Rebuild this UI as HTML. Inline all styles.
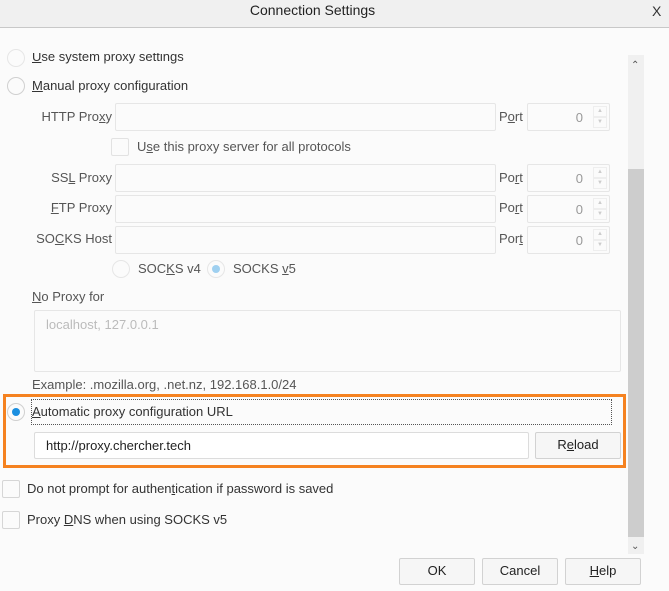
<!DOCTYPE html>
<html><head><style>
*{box-sizing:border-box;margin:0;padding:0}
body{width:669px;height:591px;background:#fbfbfb;font-family:"Liberation Sans",sans-serif;font-size:13px;color:#333;position:relative;overflow:hidden}
.a{position:absolute;white-space:nowrap}
.t{position:absolute;white-space:nowrap;line-height:16px}
.in{position:absolute;background:#fff;border:1px solid #dcdcdc;border-radius:2px}
.dis{background:#fbfbfb;border-color:#e6e6e6}
.rad{position:absolute;width:18px;height:18px;border:1px solid #d0d0d0;border-radius:50%;background:#fbfbfb}
.rad.dim{border-color:#e6e6e6}
.rad.on::after{content:"";position:absolute;left:4px;top:4px;width:8px;height:8px;border-radius:50%;background:#1b8fe0}
.rad.on.dim::after{background:#9fd0f0}
.cb{position:absolute;width:18px;height:18px;border:1px solid #d6d6d6;border-radius:2px;background:#fbfbfb}
.g{color:#999}
.btn{position:absolute;background:#f6f6f6;border:1px solid #d2d2d2;border-radius:2px;text-align:center;line-height:24px;color:#222}
.sp{position:absolute;right:2px;width:14px;height:11px;border:1px solid #eee;font-size:6px;color:#ccc;text-align:center;line-height:9px}
u{text-decoration:underline}
</style></head><body>
<div class="a" style="left:0;top:0;width:669px;height:28px;background:#f0f0f0;border-bottom:1px solid #c8c8c8"></div>
<div class="t" style="left:0;width:625px;text-align:center;top:2px;font-size:14px;color:#222">Connection Settings</div>
<div class="t" style="left:652px;top:3px;font-size:14px;color:#333">X</div>

<div class="rad dim" style="left:7px;top:49px"></div>
<div class="a" style="left:0;top:29px;width:626px;height:20px;background:#fbfbfb"></div>
<div class="t" style="left:32px;top:49px;clip-path:inset(4px 0 0 0)"><u>U</u>se system proxy settings</div>
<div class="rad" style="left:7px;top:77px"></div>
<div class="t" style="left:32px;top:78px"><u>M</u>anual proxy configuration</div>

<div class="t g" style="left:0;width:112px;text-align:right;top:109px;color:#555">HTTP Pro<u>x</u>y</div>
<div class="in dis" style="left:115px;top:103px;width:381px;height:28px"></div>
<div class="t" style="left:499px;top:109px;color:#555">P<u>o</u>rt</div>
<div class="in dis" style="left:527px;top:103px;width:83px;height:28px"><span class="a g" style="right:26px;top:6px">0</span><div class="sp" style="top:2px">▲</div><div class="sp" style="top:13px">▼</div></div>
<div class="cb" style="left:111px;top:138px;border-color:#e2e2e2"></div>
<div class="t" style="left:137px;top:139px;color:#555">U<u>s</u>e this proxy server for all protocols</div>

<div class="t" style="left:0;width:112px;text-align:right;top:170px;color:#555">SS<u>L</u> Proxy</div>
<div class="in dis" style="left:115px;top:164px;width:381px;height:28px"></div>
<div class="t" style="left:499px;top:170px;color:#555">Po<u>r</u>t</div>
<div class="in dis" style="left:527px;top:164px;width:83px;height:28px"><span class="a g" style="right:26px;top:6px">0</span><div class="sp" style="top:2px">▲</div><div class="sp" style="top:13px">▼</div></div>

<div class="t" style="left:0;width:112px;text-align:right;top:200px;color:#555"><u>F</u>TP Proxy</div>
<div class="in dis" style="left:115px;top:195px;width:381px;height:28px"></div>
<div class="t" style="left:499px;top:200px;color:#555">Po<u>r</u>t</div>
<div class="in dis" style="left:527px;top:195px;width:83px;height:28px"><span class="a g" style="right:26px;top:6px">0</span><div class="sp" style="top:2px">▲</div><div class="sp" style="top:13px">▼</div></div>

<div class="t" style="left:0;width:112px;text-align:right;top:231px;color:#555">SO<u>C</u>KS Host</div>
<div class="in dis" style="left:115px;top:226px;width:381px;height:28px"></div>
<div class="t" style="left:499px;top:231px;color:#555">Por<u>t</u></div>
<div class="in dis" style="left:527px;top:226px;width:83px;height:28px"><span class="a g" style="right:26px;top:6px">0</span><div class="sp" style="top:2px">▲</div><div class="sp" style="top:13px">▼</div></div>

<div class="rad dim" style="left:112px;top:260px"></div>
<div class="t" style="left:138px;top:261px;color:#555">SOC<u>K</u>S v4</div>
<div class="rad dim on" style="left:207px;top:260px"></div>
<div class="t" style="left:233px;top:261px;color:#555">SOCKS <u>v</u>5</div>

<div class="t" style="left:32px;top:289px;color:#555"><u>N</u>o Proxy for</div>
<div class="in dis" style="left:34px;top:310px;width:587px;height:62px"><span class="a" style="left:11px;top:6px;color:#bbb">localhost, 127.0.0.1</span></div>
<div class="t" style="left:32px;top:377px;color:#555">Example: .mozilla.org, .net.nz, 192.168.1.0/24</div>

<div class="a" style="left:3px;top:394px;width:623px;height:74px;border:3px solid #f58220"></div>
<div class="rad on" style="left:7px;top:403px"></div>
<div class="a" style="left:31px;top:399px;width:581px;height:26px;border:1px dotted #555"></div>
<div class="t" style="left:32px;top:404px"><u>A</u>utomatic proxy configuration URL</div>
<div class="in" style="left:34px;top:432px;width:495px;height:27px"><span class="a" style="left:11px;top:5px;color:#222">http://proxy.chercher.tech</span></div>
<div class="btn" style="left:535px;top:432px;width:86px;height:27px">R<u>e</u>load</div>

<div class="cb" style="left:2px;top:480px"></div>
<div class="t" style="left:27px;top:481px">Do not prompt for authen<u>t</u>ication if password is saved</div>
<div class="cb" style="left:2px;top:511px"></div>
<div class="t" style="left:27px;top:512px">Proxy <u>D</u>NS when using SOCKS v5</div>

<div class="a" style="left:628px;top:55px;width:16px;height:499px;background:#f0f0f0"></div>
<div class="a" style="left:628px;top:169px;width:16px;height:368px;background:#cdcdcd"></div>
<div class="t" style="left:631px;top:58px;font-size:10px;color:#555">&#8963;</div>
<div class="t" style="left:631px;top:539px;font-size:10px;color:#555">&#8964;</div>

<div class="btn" style="left:399px;top:558px;width:76px;height:27px">OK</div>
<div class="btn" style="left:482px;top:558px;width:76px;height:27px">Cancel</div>
<div class="btn" style="left:565px;top:558px;width:76px;height:27px"><u>H</u>elp</div>
</body></html>
